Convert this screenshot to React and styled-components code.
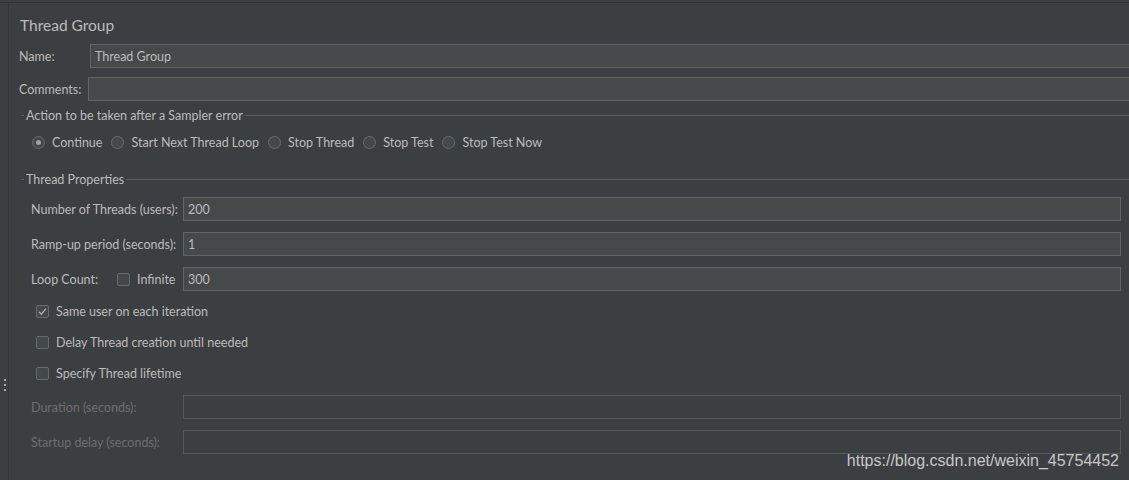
import React from "react";
import styled, { createGlobalStyle } from "styled-components";

const GlobalStyle = createGlobalStyle`
  html, body {
    margin: 0;
    padding: 0;
    background: #3c3f41;
  }
  body {
    font-family: Lato, "Noto Sans", sans-serif;
    font-size: 12.5px;
    color: #bbbbbb;
  }
`;

const Frame = styled.div`
  position: relative;
  width: 1129px;
  height: 480px;
  overflow: hidden;
  padding-top: 2px;
  box-sizing: border-box;
  background: #3c3f41;
`;

const Inner = styled.div`
  display: flex;
  height: 100%;
  border-top: 1px solid #313335;
`;

const Gutter = styled.div`
  width: 9px;
  flex: none;
  display: flex;
  flex-direction: column;
  align-items: center;
  padding-top: 376px;
  gap: 3px;
  box-sizing: border-box;
  border-right: 1px solid #323437;
`;

const Dot = styled.span`
  width: 2px;
  height: 2px;
  background: #a9a9a9;
  margin-left: 1px;
`;

const Content = styled.div`
  flex: 1;
  padding: 12px 0 0 10px;
  display: flex;
  flex-direction: column;
  min-width: 0;
`;

const Title = styled.div`
  font-size: 15.5px;
  line-height: 20px;
  height: 20px;
  padding-left: 1px;
  color: #bbbbbb;
`;

const Row = styled.div`
  display: flex;
  align-items: center;
  height: 24px;
  margin-top: ${(p) => p.$top || 0}px;
`;

const Label = styled.div`
  width: ${(p) => p.$w}px;
  flex: none;
  white-space: nowrap;
  color: ${(p) => (p.$disabled ? "#6c6e70" : "#bbbbbb")};
`;

const Field = styled.div`
  flex: 1;
  height: 24px;
  box-sizing: border-box;
  border: 1px solid ${(p) => (p.$disabled ? "#565859" : "#646464")};
  background: ${(p) => (p.$disabled ? "#3c3f41" : "#45494a")};
  padding: 0 4px;
  display: flex;
  align-items: center;
  color: #bbbbbb;
  margin-right: ${(p) => (p.$overflow ? -20 : 0)}px;
`;

const Section = styled.div`
  margin: ${(p) => p.$top || 0}px 0 0 2px;
  display: flex;
  flex-direction: column;
`;

const Legend = styled.div`
  display: flex;
  align-items: center;
  height: 16px;
  margin-right: -20px;
  &::before {
    content: "";
    width: 3px;
    height: 1px;
    background: #5b5e60;
    margin-right: 2px;
  }
  &::after {
    content: "";
    flex: 1;
    height: 1px;
    background: #5b5e60;
    margin-left: 2px;
  }
`;

const Body = styled.div`
  padding: 0 8px 0 10px;
  display: flex;
  flex-direction: column;
`;

const RadioRow = styled.div`
  display: flex;
  align-items: center;
  height: 20px;
  margin-top: 9px;
  padding-left: 1px;
  gap: 9px;
`;

const Choice = styled.label`
  display: flex;
  align-items: center;
  gap: 7px;
  white-space: nowrap;
`;

const Radio = styled.span`
  width: 13px;
  height: 13px;
  box-sizing: border-box;
  border-radius: 50%;
  border: 1px solid #686b6d;
  background: #43494a;
  display: flex;
  align-items: center;
  justify-content: center;
  &::after {
    content: "";
    width: 5px;
    height: 5px;
    border-radius: 50%;
    background: ${(p) => (p.$on ? "#9fa2a4" : "transparent")};
  }
`;

const Box = styled.span`
  width: 13px;
  height: 13px;
  box-sizing: border-box;
  border-radius: 2px;
  border: 1px solid #686b6d;
  background: #43494a;
  display: flex;
  align-items: center;
  justify-content: center;
  flex: none;
`;

const CheckRow = styled.div`
  display: flex;
  align-items: center;
  height: 20px;
  margin-top: ${(p) => p.$top}px;
  padding-left: 5px;
  gap: 7px;
`;

const Infinite = styled.div`
  width: 66px;
  flex: none;
  display: flex;
  align-items: center;
  gap: 7px;
`;

const Watermark = styled.div`
  position: absolute;
  right: 10px;
  bottom: 10px;
  font-family: "Liberation Sans", Arial, sans-serif;
  font-size: 16px;
  color: rgba(225, 225, 225, 0.85);
`;

const Check = () => (
  <svg width="11" height="11" viewBox="0 0 11 11">
    <path d="M2 5.8 L4.4 8.2 L9 2.6" fill="none" stroke="#a6a8aa" strokeWidth="1.4" />
  </svg>
);

const Checkbox = ({ checked, label, top }) => (
  <CheckRow $top={top}>
    <Box>{checked && <Check />}</Box>
    <span>{label}</span>
  </CheckRow>
);

const actions = ["Continue", "Start Next Thread Loop", "Stop Thread", "Stop Test", "Stop Test Now"];

export default function App() {
  return (
    <>
      <GlobalStyle />
      <Frame>
        <Inner>
          <Gutter>
            <Dot />
            <Dot />
            <Dot />
          </Gutter>
          <Content>
            <Title>Thread Group</Title>
            <Row $top={9}>
              <Label $w={71}>Name:</Label>
              <Field $overflow>Thread Group</Field>
            </Row>
            <Row $top={9}>
              <Label $w={69}>Comments:</Label>
              <Field $overflow />
            </Row>

            <Section $top={6}>
              <Legend>Action to be taken after a Sampler error</Legend>
              <Body>
                <RadioRow>
                  {actions.map((a, i) => (
                    <Choice key={a}>
                      <Radio $on={i === 0} />
                      {a}
                    </Choice>
                  ))}
                </RadioRow>
              </Body>
            </Section>

            <Section $top={19}>
              <Legend>Thread Properties</Legend>
              <Body>
                <Row $top={10}>
                  <Label $w={152}>Number of Threads (users):</Label>
                  <Field>200</Field>
                </Row>
                <Row $top={11}>
                  <Label $w={152}>Ramp-up period (seconds):</Label>
                  <Field>1</Field>
                </Row>
                <Row $top={11}>
                  <Label $w={86}>Loop Count:</Label>
                  <Infinite>
                    <Box />
                    <span>Infinite</span>
                  </Infinite>
                  <Field>300</Field>
                </Row>
                <Checkbox checked top={10} label="Same user on each iteration" />
                <Checkbox top={11} label="Delay Thread creation until needed" />
                <Checkbox top={11} label="Specify Thread lifetime" />
                <Row $top={12}>
                  <Label $w={152} $disabled>Duration (seconds):</Label>
                  <Field $disabled />
                </Row>
                <Row $top={11}>
                  <Label $w={152} $disabled>Startup delay (seconds):</Label>
                  <Field $disabled />
                </Row>
              </Body>
            </Section>
          </Content>
        </Inner>
        <Watermark>https://blog.csdn.net/weixin_45754452</Watermark>
      </Frame>
    </>
  );
}
